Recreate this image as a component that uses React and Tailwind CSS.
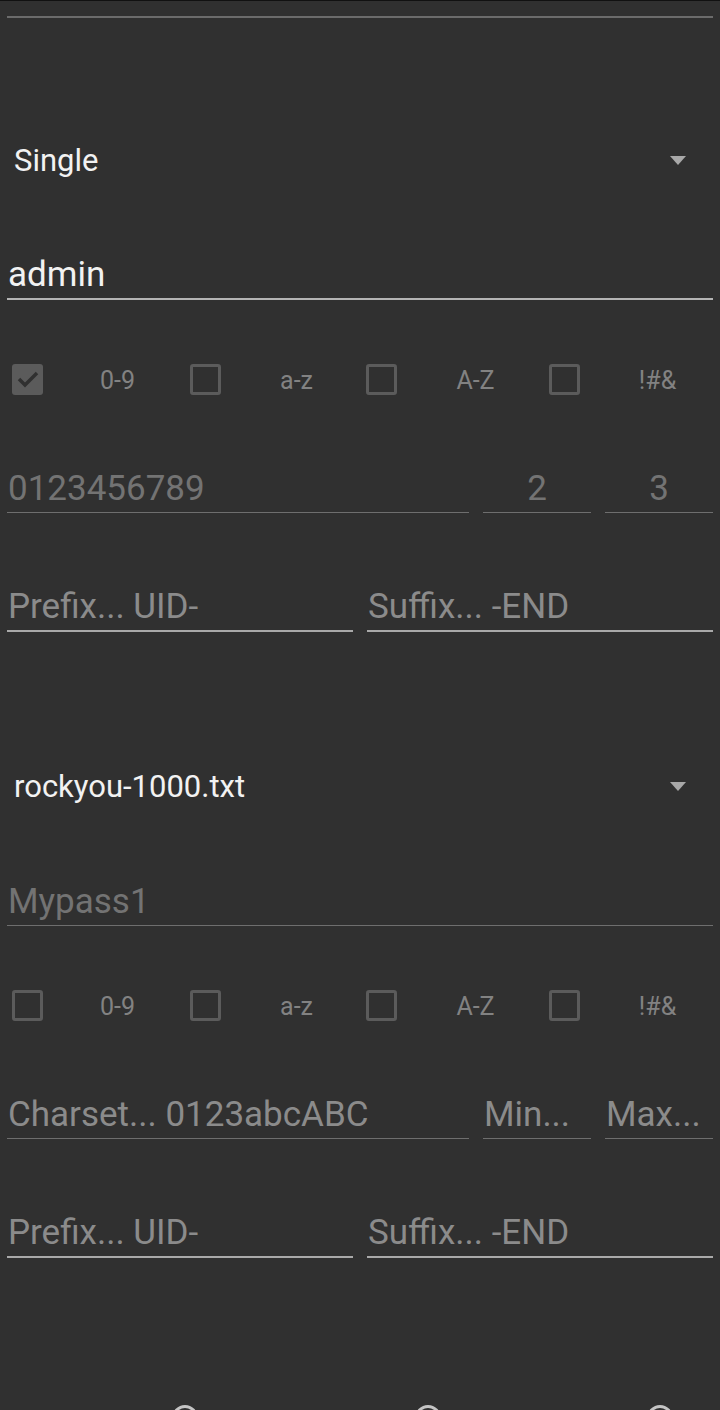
const FONT = { fontFamily: "Roboto, 'Noto Sans', sans-serif" };

const Arrow = () => (
  <svg width="16" height="9" viewBox="0 0 16 9" className="shrink-0">
    <path d="M0 0 L16 0 L8 9 Z" fill="#a8a8a8" />
  </svg>
);

const Spinner = ({ value }) => (
  <div className="h-[80px] flex items-center pl-[14px] pr-[34px]">
    <span className="flex-1 text-[31px] text-[#f2f2f2] leading-none">{value}</span>
    <Arrow />
  </div>
);

const Field = ({ text, strong, dim, center, className = "" }) => (
  <div
    className={
      "flex items-end pb-[3px] " +
      (strong ? "border-b-2 border-[#a9a9a9] " : "border-b border-[#6e6e6e] ") +
      (center ? "justify-center " : "pl-px ") +
      className
    }
  >
    <span
      className={
        "text-[35px] leading-[41px] whitespace-nowrap " +
        (strong === "value" ? "text-[#f2f2f2]" : dim ? "text-[#737373]" : "text-[#8b8b8b]")
      }
    >
      {text}
    </span>
  </div>
);

const Checkbox = ({ checked }) =>
  checked ? (
    <div className="w-[31px] h-[31px] rounded-[3px] bg-[#5b5b5b] flex items-center justify-center shrink-0">
      <svg width="22" height="18" viewBox="0 0 22 18">
        <path d="M2 9 L8 15 L20 3" fill="none" stroke="#303030" strokeWidth="3.5" />
      </svg>
    </div>
  ) : (
    <div className="w-[31px] h-[31px] rounded-[3px] border-[3px] border-[#5b5b5b] shrink-0" />
  );

const cols = [
  { label: "0-9", ml: "ml-[12px]", pl: "pl-[12px]" },
  { label: "a-z", ml: "ml-[10px]", pl: "pl-[12px]" },
  { label: "A-Z", ml: "ml-[6px]", pl: "pl-[14px]" },
  { label: "!#&", ml: "ml-[9px]", pl: "pl-[15px]" },
];

const CheckRow = ({ first }) => (
  <div className="h-[158px] grid grid-cols-4 items-center">
    {cols.map((c, i) => (
      <div key={c.label} className="flex items-center">
        <div className={c.ml}>
          <Checkbox checked={first && i === 0} />
        </div>
        <span className={"flex-1 text-center text-[25px] leading-none pt-[3px] text-[#828282] " + c.pl}>
          {c.label}
        </span>
      </div>
    ))}
  </div>
);

const Section = ({ spinner, word, wordStrong, first, charset, min, max }) => (
  <div className="h-[626px] shrink-0 flex flex-col px-[7px]">
    <div className="h-[102px] shrink-0" />
    <div className="-mx-[7px] shrink-0">
      <Spinner value={spinner} />
    </div>
    <div className="h-[100px] shrink-0 flex flex-col justify-end">
      {wordStrong ? (
        <Field text={word} strong="value" className="h-[50px] !border-[#b4b4b4]" />
      ) : (
        <Field text={word} dim className="h-[50px]" />
      )}
    </div>
    <div className="-mx-[7px] shrink-0">
      <CheckRow first={first} />
    </div>
    <div className="h-[55px] shrink-0 flex items-end gap-[14px]">
      <Field text={charset} dim={first} className="flex-1" />
      <Field text={min} dim={first} center={first} className="w-[108px]" />
      <Field text={max} dim={first} center={first} className="w-[108px]" />
    </div>
    <div className="h-[120px] shrink-0 flex items-end gap-[14px] pb-[1px]">
      <Field text="Prefix... UID-" strong className="flex-1" />
      <Field text="Suffix... -END" strong className="flex-1" />
    </div>
  </div>
);

export default function App() {
  return (
    <div className="w-[720px] h-[1410px] overflow-hidden bg-[#303030] flex flex-col" style={FONT}>
      <div className="h-px shrink-0 bg-[#111111]" />
      <div className="h-[15px] shrink-0" />
      <div className="mx-[7px] h-[2px] shrink-0 bg-[#6b6b6b]" />
      <Section
        spinner="Single"
        word="admin"
        wordStrong
        first
        charset="0123456789"
        min="2"
        max="3"
      />
      <Section
        spinner="rockyou-1000.txt"
        word="Mypass1"
        charset="Charset... 0123abcABC"
        min="Min..."
        max="Max..."
      />
      <div className="h-[135px] shrink-0" />
      <div className="flex shrink-0">
        <div className="ml-[172px] w-[26px] h-[26px] rounded-full border-[3px] border-[#c4c4c4]" />
        <div className="ml-[217px] w-[26px] h-[26px] rounded-full border-[3px] border-[#c4c4c4]" />
        <div className="ml-[206px] w-[26px] h-[26px] rounded-full border-[3px] border-[#c4c4c4]" />
      </div>
    </div>
  );
}
